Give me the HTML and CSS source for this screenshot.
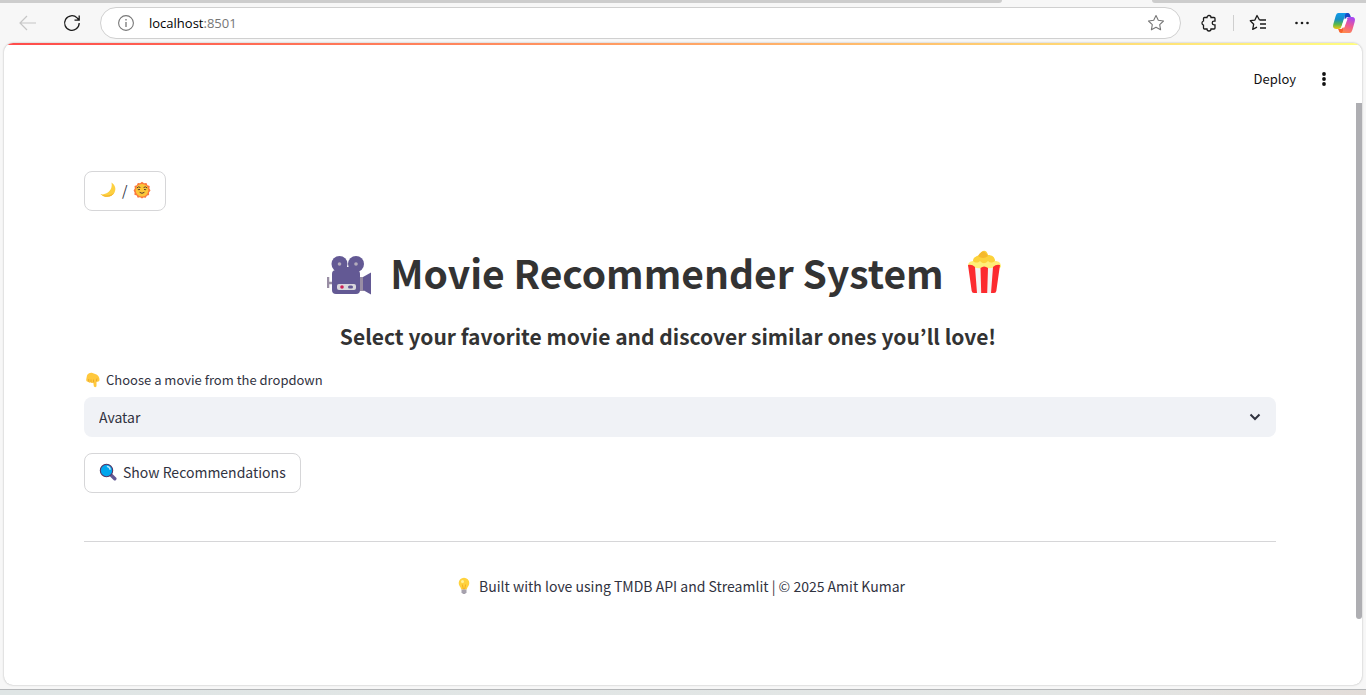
FILE: index.html
```
<!DOCTYPE html>
<html lang="en">
<head>
<meta charset="utf-8">
<title>Movie Recommender System</title>
<link rel="stylesheet" href="styles.css">
</head>
<body>
<div class="tabstrip"><span class="tabs-left"></span><span class="tabs-right"></span></div>
<header class="toolbar">
  <button class="tool back" aria-label="Back"><svg width="18" height="16" viewBox="0 0 18 16"><path d="M9 1L2 8l7 7M2 8H18" fill="none" stroke="#c6c6c6" stroke-width="1.200"/></svg></button>
  <button class="tool reload" aria-label="Reload"><svg width="18" height="18" viewBox="0 0 18 18"><path d="M16.200 9a7.300 7.300 0 1 1-2.100-5.100L16 6M16.200 1.500V6.200H11.500" fill="none" stroke="#1b1b1b" stroke-width="1.300"/></svg></button>
  <div class="address">
    <svg width="18" height="18" viewBox="0 0 18 18"><circle cx="9" cy="9" r="7.400" fill="none" stroke="#777" stroke-width="1.100"/><path d="M9 8v5M9 5v1.400" stroke="#777" stroke-width="1.300"/></svg>
    <span class="url">localhost<span class="port">:8501</span></span>
    <button class="tool" aria-label="Add to favorites"><svg width="18" height="18" viewBox="0 0 18 18"><path d="M9 1.500l2.300 4.800 5.200.7-3.800 3.600.9 5.200L9 13.300l-4.600 2.500.9-5.200L1.500 7l5.200-.7z" fill="none" stroke="#777" stroke-width="1.100" stroke-linejoin="round"/></svg></button>
  </div>
  <div class="tools">
    <button class="tool" aria-label="Extensions"><svg width="18" height="18" viewBox="0 0 18 18"><path d="M4.500 3.500H7a2 2 0 0 1 4 0h3a1 1 0 0 1 1 1V7.200h-1a1.800 1.800 0 0 0 0 3.600h1V14a1 1 0 0 1-1 1h-3a2 2 0 0 1-4 0H4.500a1 1 0 0 1-1-1v-2.800a2.200 2.200 0 0 1 0-4.200V4.500a1 1 0 0 1 1-1z" fill="none" stroke="#1b1b1b" stroke-width="1.300"/></svg></button>
    <span class="divider"></span>
    <button class="tool" aria-label="Favorites"><svg width="18" height="18" viewBox="0 0 18 18"><path d="M10.500 6L8 1.500 5.900 6.100 1.300 6.700l3.400 3.500-1 5.200L8 13.200M10.500 6H17M11 10h6M11 14h6" fill="none" stroke="#1b1b1b" stroke-width="1.300" stroke-linejoin="round"/></svg></button>
    <button class="tool dots" aria-label="Settings"><svg width="18" height="18" viewBox="0 0 18 18"><g fill="#1b1b1b"><circle cx="3.500" cy="9" r="1.300"/><circle cx="9" cy="9" r="1.300"/><circle cx="14.500" cy="9" r="1.300"/></g></svg></button>
    <button class="tool" aria-label="Copilot"><svg width="24" height="24" viewBox="0 0 24 24"><defs><linearGradient id="ca" x1="0" y1="0" x2="0" y2="1"><stop offset="0" stop-color="#119bec"/><stop offset=".4" stop-color="#168fc5"/><stop offset=".7" stop-color="#59b84a"/><stop offset="1" stop-color="#f4c512"/></linearGradient><linearGradient id="cb" x1=".6" y1="0" x2=".3" y2="1"><stop offset="0" stop-color="#a847f2"/><stop offset=".5" stop-color="#ee5a92"/><stop offset="1" stop-color="#ff8a4c"/></linearGradient></defs><path d="M12 2h4c1.500 0 2.200 2 2.800 4H16c-2 0-2.600 1.500-3.200 3.500z" fill="#1748c6"/><path d="M12 22H9c-2 0-2-3-3-4h3c1.500 0 2-2 2.500-4z" fill="#f7622c"/><path d="M6.500 2H15c-1.600.4-2 2-2.500 3.700L10 14c-.8 2.800-1.500 4-3.800 4H4c-2.700 0-3.500-2-2.700-4.700L3.500 5.500C4.300 3 5 2 6.500 2z" fill="url(#ca)"/><path d="M17.500 22H9c1.600-.4 2-2 2.500-3.700L14 10c.8-2.800 1.500-4 3.800-4H20c2.700 0 3.500 2 2.700 4.700l-2.200 7.800C19.700 21 19 22 17.500 22z" fill="url(#cb)"/><path d="M12.300 8h3.200L12.300 16.500H9.200z" fill="#fff"/></svg></button>
  </div>
</header>
<div class="page">
  <div class="accent"></div>
  <div class="appbar">
    <button class="deploy">Deploy</button>
    <button class="tool" aria-label="Main menu"><svg width="16" height="16" viewBox="0 0 16 16"><g fill="#111"><circle cx="8" cy="3" r="1.900"/><circle cx="8" cy="8" r="1.900"/><circle cx="8" cy="13" r="1.900"/></g></svg></button>
  </div>
  <div class="scroller">
  <main class="content">
    <button class="btn theme" aria-label="Toggle theme">
      <svg width="18" height="18" viewBox="0 0 18 18"><path d="M12.500 1.500c3.500 2.300 5 6.300 3 10-2.600 5-9.500 6-14 1.500 1.500.7 3.500.5 5.500-.4C11.300 10.600 13.500 6.500 12.500 1.500z" fill="#fdd041"/><path d="M1.500 13c4.500 4.500 11.400 3.500 14-1.500-3.500 3-8.500 4.300-14 1.500z" fill="#f3b52b"/></svg>
      <span>/</span>
      <svg width="18" height="18" viewBox="0 0 18 18"><path d="M9 .7l2 1.500 2.500-.3.900 2.300 2.300.9-.3 2.500L17.500 9.500l-1.500 2 .1 2.500-2.300.7-1 2.100-2.300-.4L9 17.500l-2-1.200-2.300.5-1-2.200-2.300-.8.200-2.400L.6 9.400l1.200-2-.3-2.400 2.300-.8 1-2.300 2.300.3z" fill="#fb793c"/><circle cx="9" cy="9.200" r="6.300" fill="#fcc637"/><path d="M3.800 7q1.600-2 3.600-.5M10.600 6.500q2-1.500 3.600.5M4.800 8.300q1.200 1 2.200 0M11 8.300q1.200 1 2.200 0M6.600 11.300q2.400 2 4.800 0" fill="none" stroke="#573a2d" stroke-width="1"/></svg>
    </button>
    <h1 class="title">
      <svg width="46" height="46" viewBox="0 -4 46 46"><path d="M1 24v11M1 30h5" stroke="#998ea4" stroke-width="2.500"/><path d="M32 24h5v14h-5z" fill="#998ea4"/><path d="M36 24l8-4.500v22L36 37z" fill="#635994"/><circle cx="12.500" cy="11" r="8" fill="#635994"/><circle cx="29" cy="11" r="8" fill="#635994"/><path d="M15 14h12v7H15z" fill="#635994"/><rect x="5" y="17" width="28" height="24" rx="4" fill="#635994"/><circle cx="12.500" cy="11" r="1.800" fill="#b4acbc"/><circle cx="29" cy="11" r="1.800" fill="#b4acbc"/><rect x="10" y="31" width="19" height="6" rx="2" fill="#d9d7dc"/><circle cx="15" cy="34" r="1.800" fill="#ce2056"/><rect x="21" y="32.500" width="5" height="3" rx="1.500" fill="#635994"/></svg>
      <span>Movie Recommender System</span>
      <svg width="46" height="46" viewBox="0 0 46 46"><path d="M7 17c0-4 3-5 6-5 0-4 4-5 6-5 0-4 8-4 8 0 4 0 6 1 7 5 4 0 6 2 6 6l-4 3H10z" fill="#ffef78"/><path d="M12 12c0-4 4-5 7-6 2-6 7-5 8 0 4 0 7 2 7 6-3 2-5 2-7 0-3 3-5 3-8 0-2 2-5 2-7 0z" fill="#fcd23b"/><path d="M17 7q5-9 10 0-5 4-10 0z" fill="#f5b92b"/><path d="M8 17q15 5 30 0l-3 27H11z" fill="#f4f4f4"/><path d="M7 16q4-1 7 2l2 26h-3q-2 0-2.300-2zM19.500 19q3.500-3 7.500 0l-.8 25h-6zM39 16q-4-1-7 2l-2 26h3q2 0 2.300-2z" fill="#fc2b2f"/></svg>
    </h1>
    <h3 class="subtitle">Select your favorite movie and discover similar ones you’ll love!</h3>
    <label class="label" for="movie">
      <svg width="18" height="18" viewBox="0 0 18 18"><path d="M3 4.500C4 2.500 6 1.500 8.500 2l4 1.500c2 1 3 3 3 5.500-.2 1.600-1.500 2-3 1.500V15c0 1.500-2.500 1.500-2.700 0L9.300 11.500c-1 1-2.300.7-2.600-.2-1 .7-2 .3-2.300-.6C2.500 11 2 9.500 2.300 8z" fill="#ffc83d"/><path d="M4.700 8v2.800M7 8.500v2.800M9.500 8.500v3M13 7.500q-.7 1.500-.5 3" fill="none" stroke="#e39d24" stroke-width=".7"/></svg>
      <span>Choose a movie from the dropdown</span>
    </label>
    <div class="select-wrap">
      <select id="movie" class="select"><option>Avatar</option></select>
      <svg class="chevron" width="12" height="8" viewBox="0 0 12 8"><path d="M1.500 1.500L6 6l4.500-4.500" fill="none" stroke="#31333f" stroke-width="2"/></svg>
    </div>
    <button class="btn">
      <svg width="18" height="18" viewBox="0 0 18 18"><path d="M11.500 11.500l4.300 4.300" stroke="#635994" stroke-width="3.400" stroke-linecap="round"/><circle cx="7.500" cy="7.500" r="6.200" fill="#00a6ed" stroke="#533566" stroke-width="1.100"/><path d="M8.500 3.500q2.400.4 2.500 2.800" fill="none" stroke="#b5e7ff" stroke-width="1.500" stroke-linecap="round"/></svg>
      <span>Show Recommendations</span>
    </button>
    <hr class="rule">
    <p class="credit">
      <svg width="18" height="18" viewBox="0 0 18 18"><path d="M9 .8a5.300 5.300 0 0 1 5.300 5.300c0 2.500-1.800 3.700-2.600 6.400H6.300C5.500 9.800 3.700 8.600 3.700 6.100A5.300 5.300 0 0 1 9 .8z" fill="#ffd23d"/><path d="M7.300 7.500L8.300 12h1.400l1-4.500" fill="none" stroke="#f2a51d" stroke-width=".8"/><circle cx="7.500" cy="4.500" r="1.500" fill="#fff29b"/><path d="M6.500 12.500h5v2.700L10 17H8l-1.500-1.800z" fill="#a6a1ad"/></svg>
      <span>Built with love using TMDB API and Streamlit | © 2025 Amit Kumar</span>
    </p>
  </main>
  <div class="track"><div class="thumb"></div></div>
  </div>
</div>
<div class="desktop"></div>
</body>
</html>
```
FILE: styles.css
```
* { box-sizing: border-box; }
body {
  margin: 0;
  min-height: 100vh;
  display: flex;
  flex-direction: column;
  background: #f7f7f7;
  color: #31333f;
  font-family: "Noto Sans CJK KR", "Noto Sans", sans-serif;
  font-size: 14px;
  line-height: 24px;
}
svg { display: block; flex: none; }
button { font: inherit; color: inherit; }
.tabstrip { display: flex; justify-content: space-between; height: 3px; }
.tabs-left { width: 1002px; background: #cdcdcd; border-bottom-right-radius: 8px; }
.tabs-right { width: 214px; background: #cdcdcd; border-bottom-left-radius: 8px; }
.toolbar { display: flex; align-items: center; height: 40px; padding: 0 10px 0 18px; }
.tool { display: flex; padding: 0; border: 0; background: none; }
.reload { margin-left: 27px; }
.address {
  flex: 1;
  display: flex;
  align-items: center;
  height: 32px;
  margin-left: 19px;
  padding: 0 15px 0 16px;
  border: 1px solid #d0d0d0;
  border-radius: 16px;
  background: #fff;
}
.url { flex: 1; margin-left: 14px; font: 13px/20px "Open Sans", sans-serif; color: #000; }
.port { color: #767676; }
.tools { display: flex; align-items: center; margin-left: 19px; gap: 15px; }
.divider { width: 1px; height: 16px; background: #cfcfcf; }
.dots { margin: 0 6px 0 11px; }
.page {
  flex: 1;
  display: flex;
  flex-direction: column;
  margin: 0 4px;
  overflow: hidden;
  border-radius: 9px;
  background: #fff;
  box-shadow: 0 0 2px #aaa;
}
.accent { height: 2px; background: linear-gradient(90deg, #ff4b4b, #fffd80); }
.appbar { display: flex; align-items: center; justify-content: flex-end; gap: 20px; height: 58px; padding: 10px 30px 0 0; }
.deploy { padding: 0; border: 0; background: none; font-size: 13px; color: #111; }
.scroller { flex: 1; display: flex; }
.content { flex: 1; display: flex; flex-direction: column; align-items: flex-start; padding: 68px 80px 0; }
.btn {
  display: flex;
  align-items: center;
  gap: 6px;
  height: 40px;
  padding: 0 14px 2px;
  border: 1px solid #d6d6d8;
  border-radius: 8px;
  background: #fff;
}
.theme { gap: 5px; }
.title {
  display: flex;
  align-items: center;
  justify-content: center;
  align-self: stretch;
  gap: 17px;
  margin: 31px 0 0;
  padding-right: 26px;
  font-size: 39px;
  line-height: 60px;
  font-weight: 700;
  color: #333;
}
.subtitle { align-self: stretch; margin: 19px 0 0; padding-right: 24px; text-align: center; font-size: 21px; line-height: 30px; font-weight: 700; color: #333; }
.label { display: flex; align-items: center; gap: 4px; margin: 17px 0 5px; font-size: 13px; }
.select-wrap { position: relative; align-self: stretch; margin-bottom: 16px; }
.select {
  display: block;
  width: 100%;
  height: 40px;
  padding: 0 15px;
  border: 0;
  border-radius: 8px;
  appearance: none;
  background: #f0f2f6;
  color: inherit;
  font: inherit;
}
.chevron { position: absolute; right: 15px; top: 16px; pointer-events: none; }
.rule { align-self: stretch; height: 1px; margin: 48px 0 32px; border: 0; background: #d6d6d8; }
.credit { display: flex; align-items: center; justify-content: center; align-self: stretch; gap: 6px; margin: 0; }
.track { width: 6px; }
.thumb { height: 516px; border-radius: 0 0 3px 3px; background: #aeaeb2; }
.desktop { height: 6px; margin-top: 4px; border-top: 1px solid #b5b7b9; background: linear-gradient(90deg, #dfe5e5, #e3e6e5 80%, #e2dcd8); }
```
